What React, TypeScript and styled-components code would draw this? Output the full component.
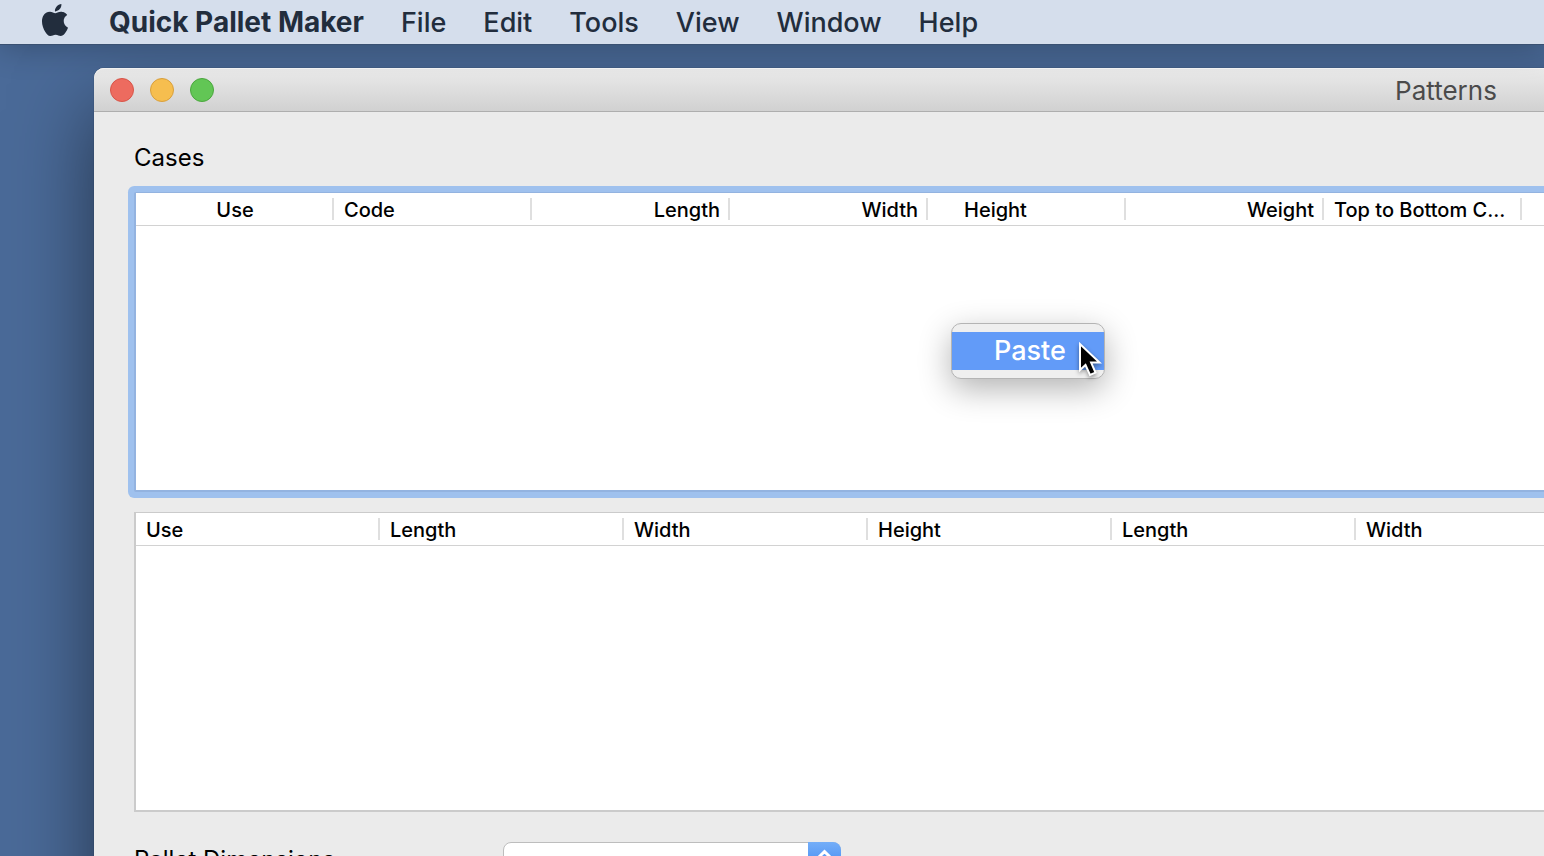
import React from "react";
import styled, { createGlobalStyle } from "styled-components";
import { SiApple } from "react-icons/si";

const GlobalStyle = createGlobalStyle`
  * { box-sizing: border-box; }
  html, body, #root { height: 100%; }
  body {
    margin: 0;
    overflow: hidden;
    background: #4a6a98;
    color: #000;
    font-family: Inter, "Liberation Sans", sans-serif;
  }
`;

const Desktop = styled.div`
  display: flex;
  flex-direction: column;
  height: 100%;
  overflow: hidden;
  background: #4a6a98;
`;

const MenuBar = styled.nav`
  position: relative;
  z-index: 2;
  display: flex;
  flex: none;
  align-items: center;
  gap: 37px;
  height: 44px;
  padding-left: 39px;
  background: #d5deec;
  box-shadow: 0 1px 0 #3a5172, 0 4px 32px rgba(0, 0, 0, 0.24);
`;

const MenuButton = styled.button<{ $bold?: boolean }>`
  height: 44px;
  padding: ${(p) => (p.$bold ? "0" : "2px 0 0")};
  border: 0;
  background: none;
  color: #222d3d;
  font-family: inherit;
  font-size: ${(p) => (p.$bold ? 28 : 27)}px;
  line-height: 42px;
  font-weight: ${(p) => (p.$bold ? 700 : 450)};
  white-space: nowrap;
`;

const AppleButton = styled(MenuButton)`
  display: flex;
  align-items: center;
  padding: 0 1px 4px 0;
`;

const Window = styled.main`
  flex: none;
  width: 175vw;
  min-height: 100%;
  margin: 24px 0 0 94px;
  border-radius: 10px 10px 0 0;
  background: #ebebeb;
  box-shadow: 0 0 1px rgba(0, 0, 0, 0.6), 0 40px 80px rgba(0, 0, 0, 0.5);
`;

const TitleBar = styled.header`
  display: grid;
  grid-template-columns: 1fr auto 1fr;
  align-items: center;
  height: 44px;
  padding: 0 14px 0 16px;
  border-bottom: 1px solid #aeaeae;
  border-radius: 10px 10px 0 0;
  background: linear-gradient(#ebebeb, #d1d1d1);
  box-shadow: inset 0 1px 0 #f6f6f6;
`;

const Lights = styled.div`
  display: flex;
  gap: 16px;
`;

const Light = styled.button<{ $fill: string; $edge: string }>`
  width: 24px;
  height: 24px;
  padding: 0;
  border: 1px solid ${(p) => p.$edge};
  border-radius: 50%;
  background: ${(p) => p.$fill};
`;

const Title = styled.h1`
  margin: 0;
  padding-top: 2px;
  color: #4b4b4b;
  font-size: 26px;
  line-height: 42px;
  font-weight: 400;
`;

const Content = styled.div`
  padding: 28px 40px 0;
`;

const SectionTitle = styled.h2`
  margin: 0 0 16px;
  font-size: 24px;
  line-height: 36px;
  font-weight: 400;
`;

const TableFrame = styled.div<{ $focused?: boolean }>`
  height: 300px;
  margin-bottom: 20px;
  border: solid ${(p) => (p.$focused ? "#93b3e0" : "#cbcbcb")};
  border-width: 1px 2px 2px;
  border-radius: ${(p) => (p.$focused ? "2px" : "0")};
  background: #fff;
  box-shadow: ${(p) => (p.$focused ? "0 0 0 6px #9fc1ee" : "none")};
`;

const Table = styled.table`
  width: 100%;
  table-layout: fixed;
  border-collapse: separate;
  border-spacing: 0;
`;

const HeaderCell = styled.th<{ $width?: number; $align?: string; $indent?: boolean }>`
  width: ${(p) => (p.$width ? `${p.$width}px` : "auto")};
  height: 33px;
  padding: 2px 10px 0 ${(p) => (p.$indent ? "36px" : "10px")};
  border-bottom: 1px solid #d2d2d2;
  overflow: hidden;
  font-size: 20px;
  line-height: 30px;
  font-weight: 450;
  text-align: ${(p) => p.$align ?? "left"};
  text-overflow: ellipsis;
  white-space: nowrap;
  background: ${(p) =>
    p.$width ? "linear-gradient(#dfdfdf, #dfdfdf) right 5px / 2px 22px no-repeat" : "none"};
`;

const FormRow = styled.div`
  display: flex;
  padding-top: 10px;
`;

const FieldLabel = styled.label`
  width: 369px;
  font-size: 24px;
  line-height: 36px;
`;

const PopUp = styled.div`
  display: grid;
  width: 338px;
  height: 42px;
`;

const PopUpSelect = styled.select`
  grid-area: 1 / 1;
  appearance: none;
  border: 1px solid #bdbdbd;
  border-radius: 8px;
  background: #fff;
  font-family: inherit;
  font-size: 24px;
`;

const PopUpCap = styled.svg`
  grid-area: 1 / 1;
  justify-self: end;
  width: 33px;
  height: 42px;
  border-radius: 0 8px 8px 0;
  background: linear-gradient(#74aef8, #2a78f0);
  pointer-events: none;
`;

const ContextMenu = styled.div`
  position: absolute;
  z-index: 3;
  top: 323px;
  left: 951px;
  width: 154px;
  padding: 8px 0;
  border: 1px solid #b4b4b4;
  border-radius: 10px;
  background: #efefef;
  box-shadow: 0 10px 32px rgba(0, 0, 0, 0.3);
`;

const ContextItem = styled.button`
  display: block;
  width: 100%;
  height: 38px;
  padding: 0 0 0 42px;
  border: 0;
  background: #629bf8;
  color: #fff;
  font-family: inherit;
  font-size: 27px;
  font-weight: 450;
  line-height: 36px;
  text-align: left;
`;

const Cursor = styled.svg`
  position: absolute;
  top: 18px;
  left: 126px;
  width: 26px;
  height: 40px;
  overflow: visible;
  filter: drop-shadow(0 2px 2px rgba(0, 0, 0, 0.4));
`;

type Column = { label: string; align?: string; indent?: boolean };

const caseColumns: Column[] = [
  { label: "Use", align: "center" },
  { label: "Code" },
  { label: "Length", align: "right" },
  { label: "Width", align: "right" },
  { label: "Height", indent: true },
  { label: "Weight", align: "right" },
  { label: "Top to Bottom C..." },
];

const palletColumns: Column[] = [
  { label: "Use" },
  { label: "Length" },
  { label: "Width" },
  { label: "Height" },
  { label: "Length" },
  { label: "Width" },
];

const menus = ["File", "Edit", "Tools", "View", "Window", "Help"];

function DataTable({ name, columns, width, focused }: { name: string; columns: Column[]; width: number; focused?: boolean }) {
  return (
    <TableFrame $focused={focused}>
      <Table aria-label={name}>
        <thead>
          <tr>
            {columns.map((c, i) => (
              <HeaderCell key={i} scope="col" $width={width} $align={c.align} $indent={c.indent}>
                {c.label}
              </HeaderCell>
            ))}
            <HeaderCell as="td" />
          </tr>
        </thead>
      </Table>
    </TableFrame>
  );
}

export default function App() {
  return (
    <Desktop>
      <GlobalStyle />
      <MenuBar>
        <AppleButton aria-label="Apple menu">
          <SiApple size={32} />
        </AppleButton>
        <MenuButton $bold>Quick Pallet Maker</MenuButton>
        {menus.map((m) => (
          <MenuButton key={m}>{m}</MenuButton>
        ))}
      </MenuBar>
      <Window>
        <TitleBar>
          <Lights>
            <Light aria-label="Close" $fill="#ed6b5f" $edge="#d85549" />
            <Light aria-label="Minimize" $fill="#f6be4f" $edge="#d9a03c" />
            <Light aria-label="Zoom" $fill="#62c655" $edge="#4ba73e" />
          </Lights>
          <Title>Patterns</Title>
        </TitleBar>
        <Content>
          <SectionTitle>Cases</SectionTitle>
          <DataTable name="Cases" columns={caseColumns} width={198} focused />
          <DataTable name="Pallets" columns={palletColumns} width={244} />
          <FormRow>
            <FieldLabel htmlFor="pallet-dimensions">Pallet Dimensions</FieldLabel>
            <PopUp>
              <PopUpSelect id="pallet-dimensions" />
              <PopUpCap viewBox="0 0 33 42" fill="none" stroke="#fff" strokeWidth="3">
                <path d="M10 16l6.500-6.500 6.500 6.500M10 26l6.500 6.500 6.500-6.500" />
              </PopUpCap>
            </PopUp>
          </FormRow>
        </Content>
      </Window>
      <ContextMenu role="menu">
        <ContextItem role="menuitem">Paste</ContextItem>
        <Cursor viewBox="0 0 26 40">
          <path
            d="M2 2v26l5.500-5 4.500 10 5.500-2.400-4.400-10h8.400z"
            fill="#000"
            stroke="#fff"
            strokeWidth="2"
          />
        </Cursor>
      </ContextMenu>
    </Desktop>
  );
}
